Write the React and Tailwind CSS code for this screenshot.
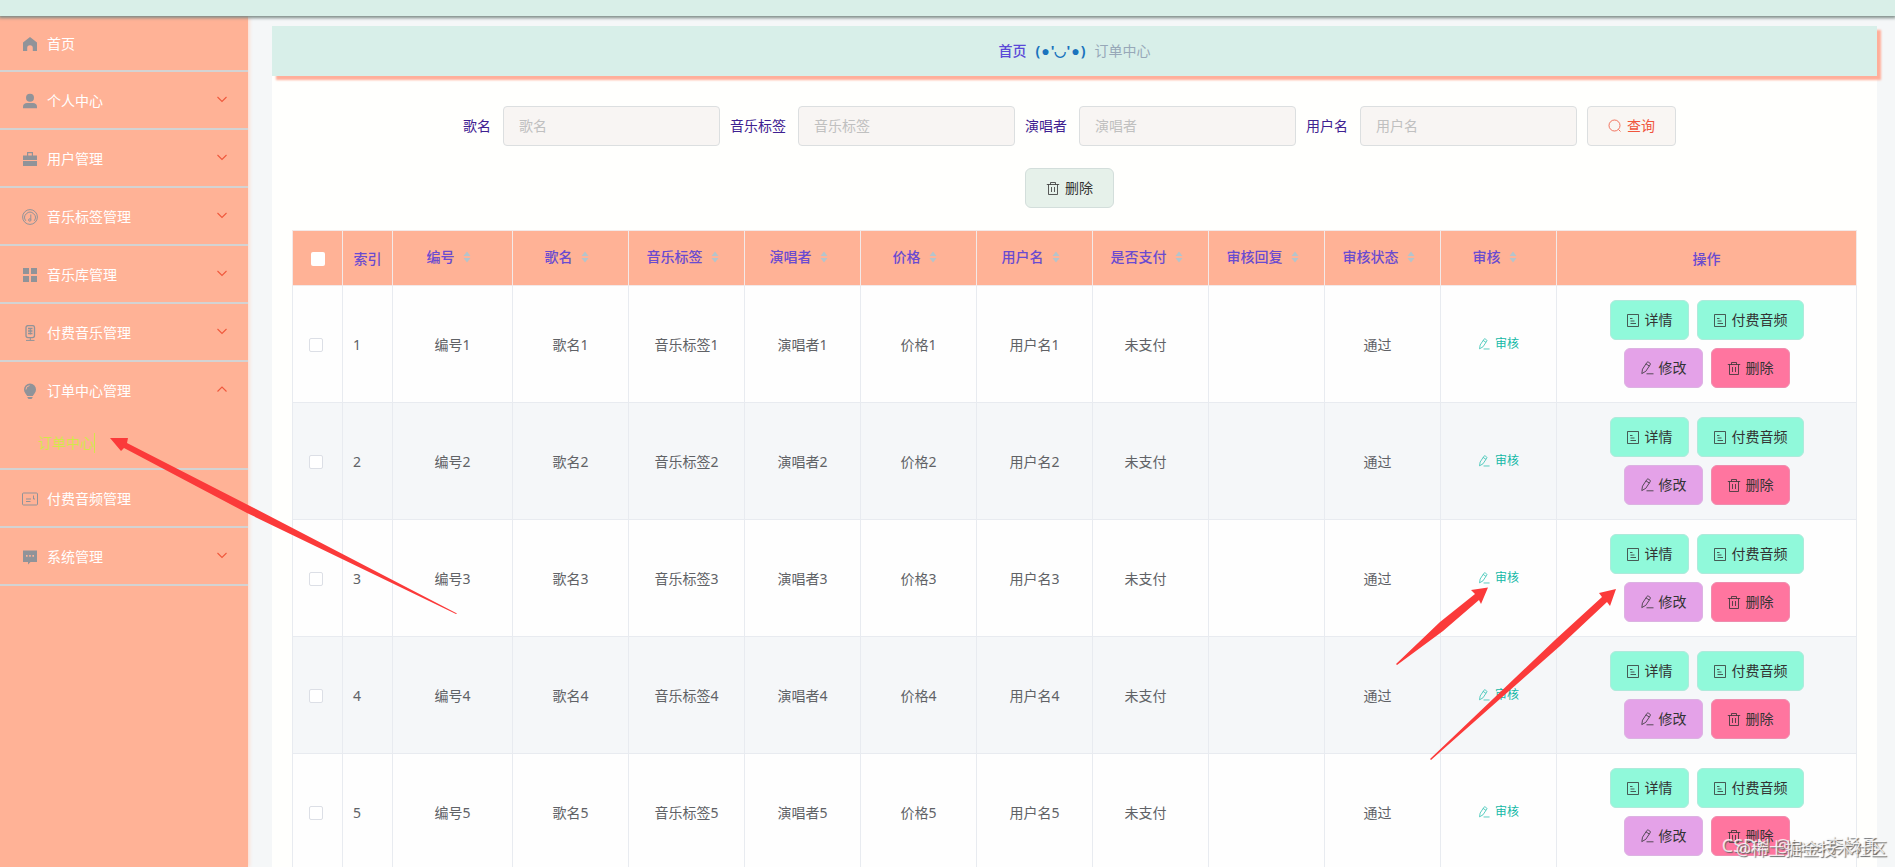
import React, { useState } from 'react'

const menus = [
  { name: '首页', icon: 'home' },
  { name: '个人中心', icon: 'user', arrow: true },
  { name: '用户管理', icon: 'bag', arrow: true },
  { name: '音乐标签管理', icon: 'gauge', arrow: true },
  { name: '音乐库管理', icon: 'grid', arrow: true },
  { name: '付费音乐管理', icon: 'mic', arrow: true },
  { name: '订单中心管理', icon: 'bulb', arrow: true, children: ['订单中心'] },
  { name: '付费音频管理', icon: 'card' },
  { name: '系统管理', icon: 'chat', arrow: true },
]

const filters = ['歌名', '音乐标签', '演唱者', '用户名']

const columns = ['编号', '歌名', '音乐标签', '演唱者', '价格', '用户名', '是否支付', '审核回复', '审核状态', '审核']

const rows = [1, 2, 3, 4, 5].map((n) => ({
  id: n,
  cells: [`编号${n}`, `歌名${n}`, `音乐标签${n}`, `演唱者${n}`, `价格${n}`, `用户名${n}`],
  states: ['未支付', '', '通过'],
}))

function MenuIcon({ name }) {
  return (
    <svg viewBox="0 0 16 16" className="w-4 h-4 shrink-0 text-[#909399]" fill="currentColor">
      {name === 'home' && <path d="M8 1 1 6.600V15h4.200v-3a2.800 2.800 0 0 1 5.600 0v3H15V6.600z" />}
      {name === 'user' && (
        <>
          <circle cx="8" cy="4.800" r="4" />
          <path d="M1 15.200v-1.600C1 11.300 2.800 10 5 10h6c2.200 0 4 1.300 4 3.600v1.600z" />
        </>
      )}
      {name === 'bag' && (
        <>
          <path d="M5 4.500V1h6v3.500h4V9H1V4.500zm1.200 0h3.600V2.200H6.200z" fillRule="evenodd" />
          <path d="M1 10h14v5H1z" />
        </>
      )}
      {name === 'gauge' && (
        <g fill="none" stroke="currentColor">
          <circle cx="8" cy="8" r="7.400" />
          <path d="M3.800 11.800A5.300 5.300 0 1 1 12.200 11.800" />
          <path d="M8.800 5.500v5" />
          <circle cx="7.800" cy="11" r="1.200" />
        </g>
      )}
      {name === 'grid' && <path d="M1 1h6v6H1zM9 1h6v6H9zM1 9h6v6H1zM9 9h6v6H9z" />}
      {name === 'mic' && (
        <g fill="none" stroke="currentColor">
          <rect x="4" y=".6" width="8.500" height="12" rx="2" strokeWidth="1.300" />
          <path d="M6 3.500h4.500M6 6h4.500M6 8.500h4.500" strokeWidth="1.300" />
          <path d="M8.300 3v6.500M8.300 12.500v2.800M4 15.400h8.500" />
        </g>
      )}
      {name === 'bulb' && (
        <>
          <path d="M8 .4a6 6 0 0 0-6 6c0 3 2 4.400 3.200 6.600h5.600C12 10.800 14 9.400 14 6.400a6 6 0 0 0-6-6z" />
          <path d="M5.500 14h5v.8L9.500 16h-3l-1-1.200z" />
          <path d="M4 6.500A3.800 3.800 0 0 1 7.500 2.600" fill="none" stroke="#ffb296" strokeWidth=".9" />
        </>
      )}
      {name === 'card' && (
        <g fill="none" stroke="currentColor">
          <rect x=".5" y="2" width="15" height="12" rx="1" />
          <path d="M4 8h5M4 10.500h4.500M11.500 4.500v3.500h1.500" />
        </g>
      )}
      {name === 'chat' && (
        <path
          fillRule="evenodd"
          d="M1 1.500h14v11.500H8.500L6 15.500V13H1zM4 6v1.800h1.600V6zm3.200 0v1.800h1.600V6zm3.200 0v1.800H12V6z"
        />
      )}
    </svg>
  )
}

function Icon({ name, className = 'w-3.5 h-3.5' }) {
  return (
    <svg viewBox="0 0 14 14" className={`${className} shrink-0`} fill="none" stroke="currentColor" strokeOpacity=".8">
      {name === 'doc' && <path d="M1.500 1.500h11v12h-11zM4 5.500h2.500M4.500 8h4M4.500 10.500h5.500" />}
      {name === 'edit' && (
        <path d="M2.500 8.200 6.800 1.600Q7.500.6 8.500 1.200L9.900 2.100Q10.800 2.800 10.200 3.700L5.800 10.300 1.800 12.600zM6 2.900 9.300 5M6.500 12.800h7" />
      )}
      {name === 'trash' && <path d="M.8 3.500h12.400M4.500 3.500v-2h5v2M2.500 3.500v10h9v-10M5.500 6v5M8.500 6v5" />}
      {name === 'search' && (
        <>
          <circle cx="6.500" cy="6.500" r="5.500" />
          <path d="M10.500 10.500 12.500 12.500" />
        </>
      )}
    </svg>
  )
}

function Sidebar() {
  const [open, setOpen] = useState('订单中心管理')

  return (
    <aside className="w-[248px] shrink-0 bg-[#ffb296] text-white shadow-[1px_0_4px_#ffd5c6]">
      <nav>
        <ul>
          {menus.map((m, i) => (
            <li key={m.name} className="border-b-2 border-[#d3d3d3]">
              <button
                type="button"
                onClick={() => setOpen(open === m.name ? '' : m.name)}
                className={`flex items-center w-full pt-0.5 pl-[22px] pr-5 text-left ${i === 0 ? 'h-[54px]' : 'h-14'}`}
              >
                <MenuIcon name={m.icon} />
                <span className="ml-[9px] flex-1">{m.name}</span>
                {m.arrow && (
                  <svg viewBox="0 0 12 12" className="w-3 h-3 mb-1" fill="none" stroke="#f0583c" strokeWidth="1.100">
                    <path d={m.children && open === m.name ? 'M1.500 8.500l4.500-4.500 4.500 4.500' : 'M1.500 4l4.500 4.500L10.500 4'} />
                  </svg>
                )}
              </button>
              {m.children && open === m.name && (
                <ul>
                  {m.children.map((c) => (
                    <li key={c}>
                      <a href="#" className="flex items-center h-[50px] pl-[38px] text-[#d3e64b]">
                        <span className="border-r border-[#d3e64b]">{c}</span>
                      </a>
                    </li>
                  ))}
                </ul>
              )}
            </li>
          ))}
        </ul>
      </nav>
    </aside>
  )
}

function SearchForm() {
  return (
    <form className="flex flex-wrap justify-center gap-x-2.5 gap-y-[22px] pr-2.5">
      {filters.map((f) => (
        <div key={f} className="flex items-center">
          <label htmlFor={f} className="pr-3 text-[#3f2191]">{f}</label>
          <input
            id={f}
            type="text"
            placeholder={f}
            className="w-[217px] h-10 px-[15px] pb-0.5 rounded border border-[#dcdfe0] bg-[#f8f5f3] placeholder:text-[#c0c0c0]"
          />
        </div>
      ))}
      <button type="button" className="flex items-center justify-center gap-[5px] w-[89px] h-10 rounded border border-[#dcdfe0] bg-[#f9f6f3] text-[#f0553c]">
        <Icon name="search" />
        查询
      </button>
      <div className="w-full flex justify-center">
        <button type="button" className="flex items-center justify-center gap-[5px] w-[89px] h-10 rounded-md border border-[#d3dedb] bg-[#e6f1ea] text-[#333]">
          <Icon name="trash" />
          删除
        </button>
      </div>
    </form>
  )
}

function ActionButton({ icon, className, children }) {
  return (
    <button type="button" className={`flex items-center gap-[5px] h-10 px-[15px] rounded-md border text-[#333] ${className}`}>
      <Icon name={icon} />
      {children}
    </button>
  )
}

function OrderTable() {
  return (
    <table className="w-full table-fixed border-collapse text-[#606266]">
      <colgroup>
        <col className="w-[50px]" />
        <col className="w-[50px]" />
        <col className="w-[120px]" />
        {columns.slice(1).map((c) => (
          <col key={c} />
        ))}
        <col className="w-[300px]" />
      </colgroup>
      <thead>
        <tr className="h-[55px] bg-[#ffb296] text-[#6a4bd0]">
          <th className="border border-[#f3e9e8] pt-0.5">
            <input type="checkbox" aria-label="全选" className="block mx-auto appearance-none w-3.5 h-3.5 rounded-xs bg-white" />
          </th>
          <th className="border border-[#f3e9e8] pt-0.5 font-medium">索引</th>
          {columns.map((c) => (
            <th key={c} className="border border-[#f3e9e8] pt-0.5 font-medium">
              <span className="flex items-center justify-center pb-1">
                {c}
                <svg viewBox="0 0 24 14" className="w-6 h-3.5" fill="#b4c4cc">
                  <path d="M12 1.500 15.500 6h-7zM12 12.500 15.500 8h-7z" />
                </svg>
              </span>
            </th>
          ))}
          <th className="border border-[#f3e9e8] pt-0.5 font-medium">操作</th>
        </tr>
      </thead>
      <tbody>
        {rows.map((r) => (
          <tr key={r.id} className="h-[117px] bg-[#fefefe] even:bg-[#f5f7f9]">
            <td className="border border-[#e8ebf0] pt-0.5">
              <input type="checkbox" aria-label={r.id} className="block ml-4 appearance-none w-3.5 h-3.5 rounded-xs border border-[#dcdfe6] bg-white" />
            </td>
            <td className="border border-[#e8ebf0] pt-0.5 pl-2.5">{r.id}</td>
            {r.cells.map((c) => (
              <td key={c} className="border border-[#e8ebf0] pt-0.5 text-center">{c}</td>
            ))}
            {r.states.map((s, i) => (
              <td key={i} className="border border-[#e8ebf0] pt-0.5 pr-2.5 text-center">{s}</td>
            ))}
            <td className="border border-[#e8ebf0]">
              <button type="button" className="flex items-center gap-[5px] mx-auto text-xs text-[#12b8a6]">
                <Icon name="edit" className="w-3 h-3" />
                审核
              </button>
            </td>
            <td className="border border-[#e8ebf0]">
              <div className="flex flex-wrap justify-center gap-2 px-2.5">
                <ActionButton icon="doc" className="bg-[#90f9da] border-[#aeeadb]">详情</ActionButton>
                <ActionButton icon="doc" className="bg-[#90f9da] border-[#aeeadb]">付费音频</ActionButton>
                <ActionButton icon="edit" className="bg-[#e4a2e8] border-[#dcb2e2]">修改</ActionButton>
                <ActionButton icon="trash" className="bg-[#ff759f] border-[#ef8cae]">删除</ActionButton>
              </div>
            </td>
          </tr>
        ))}
      </tbody>
    </table>
  )
}

// red pointers drawn over the page
function Arrows() {
  return (
    <svg className="absolute left-0 top-0 w-[1895px] h-[867px] pointer-events-none" fill="#fb3a3a">
      <path d="M110 438 128 438 127 443 250 506 457 613.500 456 614 247 513 124 448 121 451z" />
      <path d="M1488 587.500 1471 590 1475 594 1440 622 1396 664 1397 665 1443 631 1479 600 1481 604z" />
      <path d="M1616 589 1599 593 1602 597 1555 640 1430 759 1431 760 1560 646 1607 602 1610 606z" />
    </svg>
  )
}

function App() {
  return (
    <div className="relative h-screen overflow-hidden flex flex-col bg-[#f5f7f8] text-sm font-['Noto_Sans','Noto_Sans_CJK_SC',sans-serif]">
      <header className="relative z-10 h-4 shrink-0 bg-[#d9efe8] shadow-[0_1px_3px_1px_#7c8a86]" />
      <div className="flex flex-1 min-h-0">
        <Sidebar />
        <main className="flex-1 min-w-0 pl-6 pr-[18px] pt-2.5">
          <div className="relative flex items-center justify-center h-[50px] bg-[#d8efe9] shadow-[4px_4px_2px_#ffae9a]">
            <a href="#" className="font-medium text-[#5a48d8]">首页</a>
            <span className="mx-[9px] font-bold text-[#1a73bd]">
              (<span className="mx-px font-['Liberation_Sans',sans-serif]">●</span>
              '◡'
              <span className="mx-px font-['Liberation_Sans',sans-serif]">●</span>)
            </span>
            <span className="text-[#97a8b8]">订单中心</span>
          </div>
          <div className="bg-[#fffffd] px-5 pt-[30px]">
            <SearchForm />
            <div className="pt-[22px]">
              <OrderTable />
            </div>
          </div>
        </main>
      </div>
      <Arrows />
      <div className="absolute right-2 bottom-2 text-right text-white/80 [text-shadow:1px_1px_1px_#666] pointer-events-none">
        <p className="text-lg leading-5 pr-2">CSDN @Java李杨勇</p>
        <p className="-mt-4 text-[17px] leading-5">@稀土掘金技术社区</p>
      </div>
    </div>
  )
}

export default App
